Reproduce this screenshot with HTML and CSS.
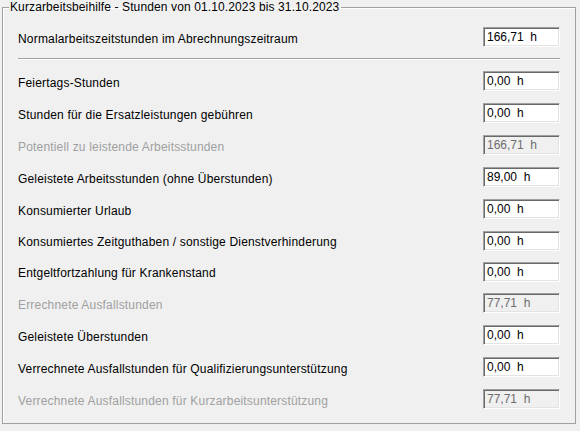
FILE: index.html
```html
<!DOCTYPE html>
<html lang="de">
<head>
<meta charset="utf-8">
<title>Kurzarbeitsbeihilfe</title>
<link rel="stylesheet" href="styles.css">
</head>
<body>
<fieldset class="group">
  <legend class="caption">Kurzarbeitsbeihilfe - Stunden von 01.10.2023 bis 31.10.2023</legend>
  <div class="rows">
    <div class="row"><span class="label">Normalarbeitszeitstunden im Abrechnungszeitraum</span><span class="box">166,71&nbsp; h</span></div>
    <div class="sep"></div>
    <div class="row"><span class="label">Feiertags-Stunden</span><span class="box">0,00&nbsp; h</span></div>
    <div class="row"><span class="label">Stunden für die Ersatzleistungen gebühren</span><span class="box">0,00&nbsp; h</span></div>
    <div class="row disabled"><span class="label">Potentiell zu leistende Arbeitsstunden</span><span class="box">166,71&nbsp; h</span></div>
    <div class="row"><span class="label">Geleistete Arbeitsstunden (ohne Überstunden)</span><span class="box">89,00&nbsp; h</span></div>
    <div class="row"><span class="label">Konsumierter Urlaub</span><span class="box">0,00&nbsp; h</span></div>
    <div class="row short"><span class="label">Konsumiertes Zeitguthaben / sonstige Dienstverhinderung</span><span class="box">0,00&nbsp; h</span></div>
    <div class="row short"><span class="label">Entgeltfortzahlung für Krankenstand</span><span class="box">0,00&nbsp; h</span></div>
    <div class="row disabled"><span class="label">Errechnete Ausfallstunden</span><span class="box">77,71&nbsp; h</span></div>
    <div class="row"><span class="label">Geleistete Überstunden</span><span class="box">0,00&nbsp; h</span></div>
    <div class="row"><span class="label">Verrechnete Ausfallstunden für Qualifizierungsunterstützung</span><span class="box">0,00&nbsp; h</span></div>
    <div class="row disabled"><span class="label">Verrechnete Ausfallstunden für Kurzarbeitsunterstützung</span><span class="box">77,71&nbsp; h</span></div>
  </div>
</fieldset>
</body>
</html>
```
FILE: styles.css
```css
html, body {
  margin: 0;
  padding: 0;
  background: #f0f0f0;
}
body {
  font-family: "Liberation Sans", Arial, sans-serif;
  font-size: 12px;
  color: #000;
  padding: 0 0 0 2px;
  width: 574px;
}
.group {
  margin: 0;
  padding: 0;
  border: 1px solid #a0a0a0;
  box-shadow: 1px 1px 0 #fff, inset 1px 1px 0 #fff;
  box-sizing: border-box;
  width: 574px;
}
.caption {
  margin-left: 6px;
  padding: 0 2px 0 1px;
  line-height: 15px;
  height: 15px;
  color: #000;
  letter-spacing: 0.12px;
}
.rows {
  display: flex;
  flex-direction: column;
  padding: 6px 15px 8px 15px;
}
.row {
  display: flex;
  align-items: center;
  justify-content: space-between;
  height: 32px;
}
.row.short {
  height: 31px;
}
.label {
  padding-top: 3px;
  letter-spacing: 0.18px;
}
.sep {
  height: 0;
  border-top: 1px solid #a0a0a0;
  border-bottom: 1px solid #fff;
  margin: 5px 0 5px 0;
}
.box {
  box-sizing: border-box;
  width: 77px;
  height: 20px;
  background: #fff;
  border: 1px solid;
  border-color: #a0a0a0 #fff #fff #a0a0a0;
  box-shadow: inset 1px 1px 0 #696969, inset -1px -1px 0 #e3e3e3;
  padding: 1px 0 0 3px;
  line-height: 16px;
  color: #000;
  white-space: nowrap;
}
.disabled .label {
  color: #a0a0a0;
}
.disabled .box {
  background: #f0f0f0;
  color: #6d6d6d;
}
```
